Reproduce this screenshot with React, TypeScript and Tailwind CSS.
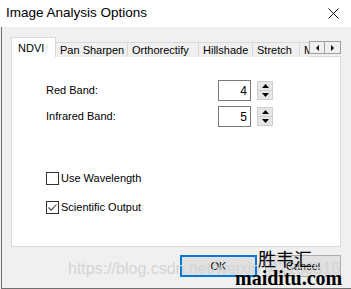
import { useState } from 'react';

const tabs = [
  { name: 'NDVI', w: 'w-[45px]' },
  { name: 'Pan Sharpen', w: 'w-[72px]' },
  { name: 'Orthorectify', w: 'w-[71px]' },
  { name: 'Hillshade', w: 'w-[54px]' },
  { name: 'Stretch', w: 'w-[47px]' },
  { name: 'Mosaic', w: 'w-[50px]' },
];

const ui = { fontFamily: '"Liberation Sans", Arial, sans-serif' };

function SpinBox({ value }: { value: number }) {
  return (
    <div className="flex items-center gap-[6px]">
      <div className="w-[33px] h-[21px] border border-[#7a7a7a] bg-white flex items-center justify-end pr-[3px] text-[12px] text-black">
        {value}
      </div>
      <div className="w-[16px] h-[19px] flex flex-col border border-[#cfcfcf] bg-[#e6e6e6]">
        <div className="flex-1 flex items-center justify-center border-b border-[#cfcfcf]">
          <svg width="7" height="4" viewBox="0 0 7 4"><path d="M0 4 L3.5 0 L7 4 Z" fill="#000" /></svg>
        </div>
        <div className="flex-1 flex items-center justify-center">
          <svg width="7" height="4" viewBox="0 0 7 4"><path d="M0 0 L3.5 4 L7 0 Z" fill="#000" /></svg>
        </div>
      </div>
    </div>
  );
}

function CheckRow({ label, checked }: { label: string; checked: boolean }) {
  return (
    <div className="flex items-center gap-[2px] h-[13px]">
      <div className="w-[13px] h-[13px] border border-[#333] bg-white flex items-center justify-center">
        {checked && (
          <svg width="11" height="11" viewBox="0 0 11 11">
            <path d="M1.5 5.5 L4.2 8.2 L9.5 2.5" fill="none" stroke="#444" strokeWidth="1.1" />
          </svg>
        )}
      </div>
      <span className="text-[11px] text-black leading-none">{label}</span>
    </div>
  );
}

export default function App() {
  const [active] = useState(0);

  return (
    <div className="w-[351px] h-[289px] relative overflow-hidden bg-[#f0f0f0]" style={ui}>
      {/* title bar */}
      <div className="h-[27px] bg-white flex items-center justify-between pl-[6px] pr-[12px]">
        <span className="text-[13.5px] text-black">Image Analysis Options</span>
        <svg width="11" height="11" viewBox="0 0 11 11">
          <path d="M0.5 0.5 L10.5 10.5 M10.5 0.5 L0.5 10.5" stroke="#111" strokeWidth="1" />
        </svg>
      </div>

      <div className="h-[262px] border-l border-b border-[#6f6f6f] ml-px pl-[9px] pr-[10px] pt-[10px] flex flex-col">
        {/* tab strip */}
        <div className="flex items-end h-[20px] relative z-10">
          <div className="flex items-end w-[299px] overflow-hidden">
            {tabs.map((t, i) =>
              i === active ? (
                <div
                  key={t.name}
                  className={`${t.w} h-[20px] shrink-0 pl-[6px] bg-white border border-b-0 border-[#d9d9d9] flex items-start pt-[2px] text-[11px] text-black`}
                >
                  {t.name}
                </div>
              ) : (
                <div
                  key={t.name}
                  className={`${t.w} h-[15px] shrink-0 pl-[4px] bg-[#f0f0f0] border border-l-0 border-b-0 border-[#d9d9d9] flex items-center text-[11px] text-black whitespace-nowrap`}
                >
                  {t.name}
                </div>
              )
            )}
          </div>
          <div className="flex self-start mt-[4px]">
            <div className="w-[16px] h-[13px] border border-[#a0a0a0] bg-[#f0f0f0] flex items-center justify-center">
              <svg width="3" height="6" viewBox="0 0 3 6"><path d="M3 0 L0 3 L3 6 Z" fill="#000" /></svg>
            </div>
            <div className="w-[16px] h-[13px] border border-l-0 border-[#a0a0a0] bg-[#f0f0f0] flex items-center justify-center">
              <svg width="3" height="6" viewBox="0 0 3 6"><path d="M0 0 L3 3 L0 6 Z" fill="#000" /></svg>
            </div>
          </div>
        </div>

        {/* tab page */}
        <div className="w-[330px] h-[191px] -mt-px bg-white border border-[#d9d9d9] pl-[34px] pt-[23px] flex flex-col">
          <div className="flex flex-col gap-[5px]">
            <div className="flex items-center">
              <span className="w-[172px] text-[11px] text-black">Red Band:</span>
              <SpinBox value={4} />
            </div>
            <div className="flex items-center">
              <span className="w-[172px] text-[11px] text-black">Infrared Band:</span>
              <SpinBox value={5} />
            </div>
          </div>
          <div className="flex flex-col gap-[16px] mt-[45px]">
            <CheckRow label="Use Wavelength" checked={false} />
            <CheckRow label="Scientific Output" checked={true} />
          </div>
        </div>

        {/* buttons */}
        <div className="flex justify-end gap-[8px] mt-[8px]">
          <button className="w-[77px] h-[22px] border-2 border-[#0078d7] bg-[#e1e1e1] text-[11px] text-black">OK</button>
          <button className="w-[76px] h-[22px] border border-[#adadad] bg-[#e1e1e1] text-[11px] text-black">Cancel</button>
        </div>
      </div>

      {/* watermarks */}
      <div className="absolute left-[68px] top-[261px] text-[16px] leading-none text-[#d4d4d4] whitespace-nowrap pointer-events-none">
        https://blog.csdn.net/weixin_42166516
      </div>
      <div
        className="absolute left-[258px] top-[249px] text-[18px] leading-none text-black whitespace-nowrap"
        style={{ fontFamily: '"Noto Sans CJK SC", sans-serif' }}
      >
        胜韦汇
      </div>
      <div
        className="absolute left-[235px] top-[268px] text-[20px] leading-none font-black text-black whitespace-nowrap"
        style={{ fontFamily: '"Liberation Serif", serif' }}
      >
        maiditu.com
      </div>
    </div>
  );
}
